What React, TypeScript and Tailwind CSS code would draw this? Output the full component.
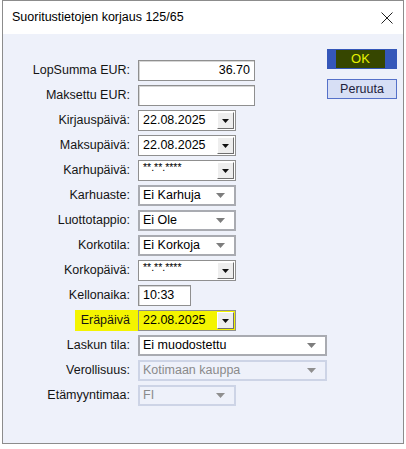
import React from "react";

const font = { fontFamily: '"Liberation Sans", Arial, sans-serif' };

function Label({ children, mark }: { children: React.ReactNode; mark?: boolean }) {
  return (
    <div className="flex items-center justify-end h-[21px] text-[12.5px] text-[#141414]">
      {mark ? (
        <span className="bg-[#f4f400] h-[21px] flex items-center pl-[6px] pr-[8px] mr-[-8px]">{children}</span>
      ) : (
        children
      )}
    </div>
  );
}

function TextBox({ value, width, right }: { value?: string; width: string; right?: boolean }) {
  return (
    <div
      className={`h-[21px] ${width} bg-white border border-[#8f8f8f] shadow-[inset_1px_1px_0_#d6d6d6] flex items-center px-[4px] text-[12.5px] text-black ${right ? "justify-end" : ""}`}
    >
      {value}
    </div>
  );
}

function DateBox({ value, mark }: { value: string; mark?: boolean }) {
  const masked = value.startsWith("*");
  return (
    <div
      className={`h-[21px] w-[98px] border border-[#8f8f8f] flex items-stretch ${mark ? "bg-[#f4f400]" : "bg-white"}`}
    >
      <div className={`flex-1 flex items-center pl-[4px] ${masked ? "text-[10.5px] pb-[5px]" : "text-[12.5px]"} text-black`}>
        {value}
      </div>
      <div className="w-[17px] my-[1px] mr-[1px] bg-[#eeeeee] border border-t-white border-l-white border-r-[#6f6f6f] border-b-[#6f6f6f] flex items-center justify-center">
        <svg width="7" height="4" viewBox="0 0 7 4">
          <path d="M0 0h7L3.5 4z" fill="#111" />
        </svg>
      </div>
    </div>
  );
}

function Combo({ value, width, disabled }: { value: string; width: string; disabled?: boolean }) {
  return (
    <div
      className={`h-[21px] ${width} border-2 flex items-center justify-between pl-[3px] pr-[9px] text-[12.5px] ${
        disabled
          ? "border-[#cdd4e6] bg-[#eef1fa] text-[#8a8a8a]"
          : "border-[#a9abb1] bg-white text-black"
      }`}
    >
      <span>{value}</span>
      <svg width="9" height="5" viewBox="0 0 9 5">
        <path d="M0 0h9L4.5 5z" fill={disabled ? "#8f8f8f" : "#7d7d7d"} />
      </svg>
    </div>
  );
}

export default function App() {
  const rows: [string, React.ReactNode, boolean?][] = [
    ["LopSumma EUR:", <TextBox value="36.70" width="w-[117px]" right />],
    ["Maksettu EUR:", <TextBox width="w-[117px]" />],
    ["Kirjauspäivä:", <DateBox value="22.08.2025" />],
    ["Maksupäivä:", <DateBox value="22.08.2025" />],
    ["Karhupäivä:", <DateBox value="**.**.****" />],
    ["Karhuaste:", <Combo value="Ei Karhuja" width="w-[98px]" />],
    ["Luottotappio:", <Combo value="Ei Ole" width="w-[98px]" />],
    ["Korkotila:", <Combo value="Ei Korkoja" width="w-[98px]" />],
    ["Korkopäivä:", <DateBox value="**.**.****" />],
    ["Kellonaika:", <TextBox value="10:33" width="w-[53px]" />],
    ["Eräpäivä", <DateBox value="22.08.2025" mark />, true],
    ["Laskun tila:", <Combo value="Ei muodostettu" width="w-[189px]" />],
    ["Verollisuus:", <Combo value="Kotimaan kauppa" width="w-[189px]" disabled />],
    ["Etämyyntimaa:", <Combo value="FI" width="w-[98px]" disabled />],
  ];

  return (
    <div className="w-[406px] h-[449px] bg-white" style={font}>
      <div className="ml-[2px] w-[402px] h-[444px] border border-[#8c8c8c] flex flex-col">
        <div className="h-[33px] bg-white flex items-center justify-between pl-[9px] pr-[10px]">
          <span className="text-[12.5px] text-black">Suoritustietojen korjaus 125/65</span>
          <svg width="12" height="12" viewBox="0 0 12 12">
            <path d="M0.5 0.5l11 11M11.5 0.5l-11 11" stroke="#222" strokeWidth="1" />
          </svg>
        </div>
        <div className="flex-1 bg-[#eef1fa] flex">
          <div className="grid grid-cols-[127px_auto] gap-x-[8px] gap-y-[4px] pt-[26px] content-start">
            {rows.map(([label, field, mark]) => (
              <React.Fragment key={label}>
                <Label mark={mark}>{label}</Label>
                <div className="flex">{field}</div>
              </React.Fragment>
            ))}
          </div>
          <div className="ml-auto mr-[14px] pt-[15px] flex flex-col gap-[10px]">
            <div className="w-[70px] h-[20px] bg-[#3557b9] flex items-center">
              <div className="w-[49px] h-[18px] ml-[9px] bg-[#364600] flex items-center justify-center text-[13px] text-[#e6f200]">
                OK
              </div>
            </div>
            <div className="w-[70px] h-[20px] bg-[#d7dff5] border border-[#5571c9] flex items-center justify-center text-[12.5px] text-[#1e1e3c]">
              Peruuta
            </div>
          </div>
        </div>
      </div>
    </div>
  );
}
